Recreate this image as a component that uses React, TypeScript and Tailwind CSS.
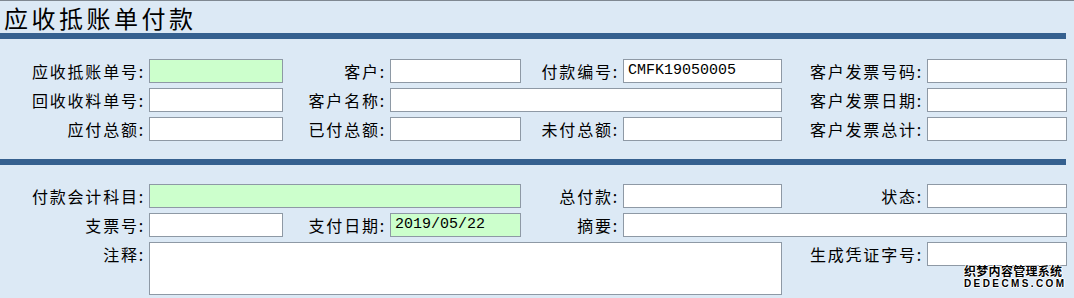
const FONT = "font-['Noto_Sans_CJK_SC','Noto_Sans',sans-serif]";

function Label({ text, top }: { text: string; top?: boolean }) {
  return (
    <div
      className={`h-[24px] flex items-center justify-end pr-[4px] text-[16px] tracking-[1.8px] text-black whitespace-nowrap ${
        top ? "self-start" : ""
      }`}
    >
      {text}:
    </div>
  );
}

interface BoxProps {
  value?: string;
  green?: boolean;
  span?: string;
  tall?: boolean;
}

function Box({ value, green, span, tall }: BoxProps) {
  return (
    <div
      className={`${span ?? ""} ${tall ? "h-[53px]" : "h-[24px] self-start"} border border-[#8e99a5] ${
        green ? "bg-[#ccffcc]" : "bg-white"
      } flex items-center pl-[4px] font-['Liberation_Mono',monospace] text-[15px] text-black`}
    >
      {value}
    </div>
  );
}

const GRID =
  "grid grid-cols-[149px_134px_107px_131px_102px_159px_145px_140px] gap-y-[5px] w-[1067px]";

export default function App() {
  return (
    <div
      className={`relative w-[1074px] h-[298px] overflow-hidden bg-[#dce9f5] border-t border-[#7f8891] ${FONT}`}
    >
      {/* Title */}
      <div className="h-[32px] pl-[4px] pt-[3px] text-[24px] leading-[28px] tracking-[3.5px] text-black">
        应收抵账单付款
      </div>
      <div className="h-[6px] w-[1066px] bg-[#35608f]" />

      {/* Section 1 */}
      <div className={`${GRID} pt-[20px]`}>
        <Label text="应收抵账单号" />
        <Box green />
        <Label text="客户" />
        <Box />
        <Label text="付款编号" />
        <Box value="CMFK19050005" />
        <Label text="客户发票号码" />
        <Box />

        <Label text="回收收料单号" />
        <Box />
        <Label text="客户名称" />
        <Box span="col-span-3" />
        <Label text="客户发票日期" />
        <Box />

        <Label text="应付总额" />
        <Box />
        <Label text="已付总额" />
        <Box />
        <Label text="未付总额" />
        <Box />
        <Label text="客户发票总计" />
        <Box />
      </div>

      <div className="h-[6px] w-[1066px] bg-[#35608f] mt-[18px]" />

      {/* Section 2 */}
      <div className={`${GRID} pt-[19px]`}>
        <Label text="付款会计科目" />
        <Box green span="col-span-3" />
        <Label text="总付款" />
        <Box />
        <Label text="状态" />
        <Box />

        <Label text="支票号" />
        <Box />
        <Label text="支付日期" />
        <Box green value="2019/05/22" />
        <Label text="摘要" />
        <Box span="col-span-3" />

        <Label text="注释" top />
        <Box span="col-span-5" tall />
        <Label text="生成凭证字号" top />
        <Box />
      </div>

      {/* Watermark */}
      <div className="absolute left-[964px] top-[262px] flex flex-col items-start text-black font-bold [text-shadow:1px_0_0_#fff,-1px_0_0_#fff,0_1px_0_#fff,0_-1px_0_#fff]">
        <span className="text-[12px] leading-[15px] tracking-[0.3px]">织梦内容管理系统</span>
        <span className="text-[10px] leading-[12px] tracking-[2.4px] font-['Liberation_Sans',sans-serif]">
          DEDECMS.COM
        </span>
      </div>
    </div>
  );
}
